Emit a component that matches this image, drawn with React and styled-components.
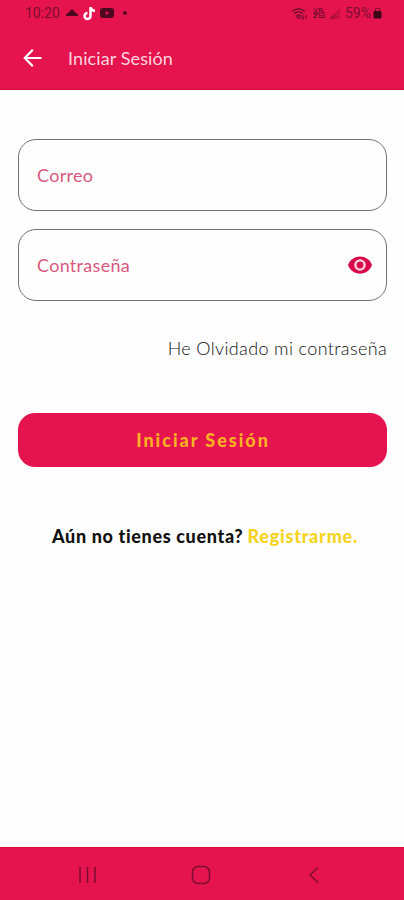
import React from 'react';
import styled, { createGlobalStyle } from 'styled-components';

const GlobalStyle = createGlobalStyle`
  * { box-sizing: border-box; }
  body { margin: 0; background: #fefefe; }
`;

const brand = '#e6144e';
const ink = '#7c0d31';

const Screen = styled.div`
  display: flex;
  flex-direction: column;
  width: 404px;
  height: 900px;
  overflow: hidden;
  background: #fefefe;
  font-family: Lato, 'Open Sans', sans-serif;
`;

const Header = styled.header`
  height: 90px;
  background: ${brand};
  border-bottom: 1px solid #d40b35;
`;

const StatusBar = styled.div`
  display: flex;
  justify-content: space-between;
  align-items: center;
  height: 26px;
  padding: 0 22px 0 25px;
  font-family: Roboto, sans-serif;
  font-size: 14px;
  line-height: 26px;
  color: ${ink};
`;

const StatusGroup = styled.div`
  display: flex;
  align-items: center;
`;

const StatusText = styled.span`
  margin-left: ${(p) => p.$gap || 0}px;
`;

const StatusIcon = styled.svg`
  display: block;
  flex: none;
  margin-left: ${(p) => p.$gap || 0}px;
`;

const TitleBar = styled.div`
  display: flex;
  align-items: center;
  height: 64px;
  padding-left: 23px;
`;

const BackButton = styled.button`
  display: flex;
  width: 45px;
  padding: 0;
  border: 0;
  background: none;
  color: #fff;
`;

const Title = styled.h1`
  margin: 0;
  font-size: 18px;
  font-weight: 400;
  line-height: 24px;
  letter-spacing: 0.1px;
  color: #fbd3de;
`;

const Form = styled.main`
  display: flex;
  flex: 1;
  flex-direction: column;
  padding: 49px 17px 0 18px;
`;

const Field = styled.label`
  display: flex;
  align-items: center;
  justify-content: space-between;
  height: 72px;
  margin-bottom: 18px;
  padding: 0 14px 0 18px;
  border: 1px solid #707070;
  border-radius: 18px;
`;

const FieldLabel = styled.span`
  font-size: 18px;
  line-height: 24px;
  letter-spacing: 0.3px;
  color: #d9587f;
`;

const ForgotLink = styled.a`
  align-self: flex-end;
  margin-top: 17px;
  font-size: 18px;
  font-weight: 300;
  line-height: 24px;
  letter-spacing: 0.36px;
  white-space: nowrap;
  color: #111;
`;

const SubmitButton = styled.button`
  height: 54px;
  margin-top: 53px;
  padding: 0 0 0 1px;
  border: 0;
  border-radius: 17px;
  background: ${brand};
  font: 900 18px/24px Lato, sans-serif;
  letter-spacing: 1.95px;
  color: #fbb124;
`;

const SignUp = styled.p`
  display: flex;
  justify-content: center;
  gap: 4px;
  margin: 57px 0 0;
  padding-left: 5px;
  font-size: 18px;
  font-weight: 900;
  line-height: 24px;
  letter-spacing: 0.65px;
  white-space: nowrap;
  color: #111;
`;

const SignUpLink = styled.a`
  letter-spacing: 0.76px;
  color: #f5d321;
`;

const NavBar = styled.nav`
  display: flex;
  align-items: center;
  justify-content: space-between;
  height: 53px;
  padding: 2px 84px 0 78px;
  background: ${brand};
  border-top: 1px solid #dc0b3c;
`;

const HomeIcon = styled.svg`
  margin-right: 3px;
`;

export default function App() {
  return (
    <Screen>
      <GlobalStyle />
      <Header>
        <StatusBar>
          <StatusGroup>
            <StatusText>10:20</StatusText>
            <StatusIcon $gap={6} width="12" height="8" viewBox="0 0 12 8">
              <path d="M0 7Q0 4 3 3.5Q4 .5 6 .5Q8 .5 9 3.5Q12 4 12 7Z" fill="#4b0920" />
            </StatusIcon>
            <StatusIcon $gap={5} width="13" height="15" viewBox="0 0 13 15">
              <path d="M7.5 1v9a3 3 0 1 1-3-3M7.5 1Q8 4.5 12 5" fill="none" stroke="#fff" strokeWidth="2.5" />
            </StatusIcon>
            <StatusIcon $gap={4} width="14" height="10" viewBox="0 0 14 10">
              <rect width="14" height="10" rx="3" fill="#4b0920" />
              <path d="M5.5 3v4l4-2z" fill={brand} />
            </StatusIcon>
            <StatusIcon $gap={9} width="4" height="4" viewBox="0 0 4 4">
              <circle cx="2" cy="2" r="1.9" fill="#4b0920" />
            </StatusIcon>
          </StatusGroup>
          <StatusGroup>
            <StatusIcon width="17" height="13" viewBox="0 0 17 13" fill="none" stroke={ink} strokeWidth="1.4">
              <path d="M1 4.5Q7.5 -1 14 4.5M3.2 6.7Q7.5 3 12 6.7M5.4 9Q7.5 7 9.6 9L7.5 11.2Z" />
              <path d="M11.8 8v4m-1.3-1.3L11.8 12l1.3-1.3M15 12V8" strokeWidth="1.1" />
            </StatusIcon>
            <StatusIcon $gap={5} width="12" height="12" viewBox="0 0 13 12" fill="none" stroke={ink} strokeWidth="1.1">
              <path d="M1 1l2 4 2-4M7 5V1h2q2 1 0 2.3H7m2 0L11.5 5M1 7h4L1 11h4M7 7v4h5V7M7 9h5M0 6h13" />
            </StatusIcon>
            <StatusIcon $gap={4} width="11" height="11" viewBox="0 0 12 12">
              <path d="M0 12L12 0V12Z" fill="#c51143" />
              <path d="M0 12L6 6V12Z" fill="#a5103d" />
            </StatusIcon>
            <StatusText $gap={5}>59%</StatusText>
            <StatusIcon $gap={2} width="9" height="12" viewBox="0 0 9 12">
              <path d="M2.2 5V2.5Q4.5 -.5 6.8 2.5V5" fill="none" stroke={ink} strokeWidth="1.2" />
              <rect x=".5" y="4" width="8" height="7.5" rx="1.5" fill="#3c0719" />
            </StatusIcon>
          </StatusGroup>
        </StatusBar>
        <TitleBar>
          <BackButton aria-label="Volver">
            <svg width="20" height="20" viewBox="0 0 20 20" fill="none" stroke="currentColor" strokeWidth="2.2">
              <path d="M18.5 10H2.5M9.8 1.7L1.8 10L9.8 18.3" />
            </svg>
          </BackButton>
          <Title>Iniciar Sesión</Title>
        </TitleBar>
      </Header>
      <Form>
        <Field>
          <FieldLabel>Correo</FieldLabel>
        </Field>
        <Field>
          <FieldLabel>Contraseña</FieldLabel>
          <svg width="24" height="18" viewBox="0 0 24 18">
            <path d="M0 9C4-2.5 20-2.5 24 9C20 20.5 4 20.5 0 9Z" fill="#d90a49" />
            <circle cx="12" cy="9" r="4.6" fill="#d90a49" stroke="#fbd3df" strokeWidth="2.4" />
          </svg>
        </Field>
        <ForgotLink>He Olvidado mi contraseña</ForgotLink>
        <SubmitButton>Iniciar Sesión</SubmitButton>
        <SignUp>
          <span>Aún no tienes cuenta?</span>
          <SignUpLink>Registrarme.</SignUpLink>
        </SignUp>
      </Form>
      <NavBar>
        <svg width="19" height="18" viewBox="0 0 19 18" stroke={ink} strokeWidth="1.5">
          <path d="M2 1v16M9.5 1v16M17 1v16" />
        </svg>
        <HomeIcon width="20" height="20" viewBox="0 0 20 20" fill="none" stroke={ink} strokeWidth="1.5">
          <rect x="1.5" y="1.5" width="17" height="17" rx="5.5" />
        </HomeIcon>
        <svg width="12" height="18" viewBox="0 0 12 18" fill="none" stroke={ink} strokeWidth="1.5">
          <path d="M10 1.5L2 9l8 7.5" />
        </svg>
      </NavBar>
    </Screen>
  );
}
